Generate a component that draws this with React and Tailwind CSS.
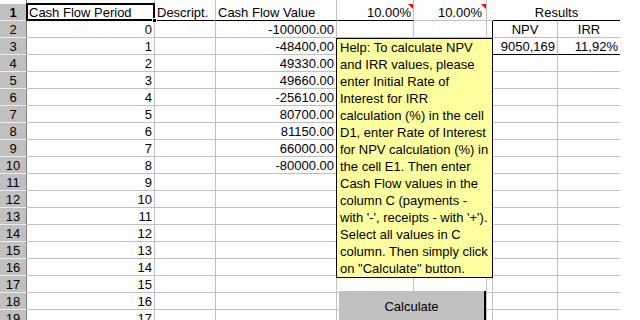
const widths = [
  "w-[27px]",
  "w-[128px]",
  "w-[61px]",
  "w-[121px]",
  "w-[77px]",
  "w-[73px]",
  "w-[6px]",
  "w-[65px]",
  "w-[62px]",
]

const values = [
  "-100000.00",
  "-48400,00",
  "49330.00",
  "49660.00",
  "-25610.00",
  "80700.00",
  "81150.00",
  "66000.00",
  "-80000.00",
]

const helpLines = [
  "Help: To calculate NPV",
  "and IRR values, please",
  "enter Initial Rate of",
  "Interest for IRR",
  "calculation (%) in the cell",
  "D1, enter Rate of Interest",
  "for NPV calculation (%) in",
  "the cell E1. Then enter",
  "Cash Flow values in the",
  "column C (payments -",
  "with '-', receipts - with '+').",
  "Select all values in C",
  "column. Then simply click",
  'on "Calculate" button.',
]

function Cell({ col, className = "", children }) {
  return (
    <div
      className={`${widths[col]} h-full shrink-0 border-r border-b border-[#c0c0c0] flex items-center px-[2px] whitespace-nowrap overflow-hidden ${className}`}
    >
      {children}
    </div>
  )
}

function RowHeader({ n, bold }) {
  return (
    <div
      className={`w-[27px] h-full shrink-0 bg-[#c0c0c0] border-r border-r-[#808080] border-b border-b-[#ececec] flex items-center justify-center ${bold ? "font-bold" : ""}`}
    >
      {n}
    </div>
  )
}

function Flag() {
  return (
    <div className="absolute right-0 top-0 w-0 h-0 border-l-[5px] border-l-transparent border-t-[5px] border-t-[#ff0000]" />
  )
}

export default function App() {
  const rows = []
  for (let r = 2; r <= 19; r++) {
    const i = r - 2
    rows.push(
      <div key={r} className="flex h-[17px]">
        <RowHeader n={r} />
        <Cell col={1} className="justify-end">{i}</Cell>
        <Cell col={2} />
        <Cell col={3} className="justify-end">{values[i] || ""}</Cell>
        <Cell col={4} />
        <Cell col={5} />
        <Cell
          col={6}
          className={r === 2 || r === 3 ? "border-r-black" : ""}
        />
        <Cell
          col={7}
          className={
            r === 2
              ? "justify-center"
              : r === 3
              ? "justify-end border-b-black"
              : ""
          }
        >
          {r === 2 ? "NPV" : r === 3 ? "9050,169" : ""}
        </Cell>
        <Cell
          col={8}
          className={
            r === 2
              ? "justify-center border-r-0"
              : r === 3
              ? "justify-end border-b-black border-r-0"
              : "border-r-0"
          }
        >
          {r === 2 ? "IRR" : r === 3 ? "11,92%" : ""}
        </Cell>
      </div>
    )
  }

  return (
    <div className="relative w-[640px] h-[320px] overflow-hidden bg-white text-black text-[13px] font-['Liberation_Sans',Arial,sans-serif] leading-none">
      {/* strip of the row above */}
      <div className="flex h-[4px]">
        <div className="w-[27px] h-full bg-white border-r border-r-[#808080]" />
        <div className="w-[128px] h-full border-r border-[#c0c0c0]" />
        <div className="w-[61px] h-full border-r border-[#c0c0c0]" />
        <div className="w-[121px] h-full border-r border-[#c0c0c0]" />
        <div className="w-[77px] h-full border-r border-[#c0c0c0]" />
        <div className="w-[73px] h-full border-r border-[#c0c0c0]" />
      </div>

      {/* row 1 */}
      <div className="flex h-[17px]">
        <RowHeader n={1} bold />
        <div className="relative w-[128px] h-full shrink-0 border-r border-b border-black flex items-center px-[2px] whitespace-nowrap">
          Cash Flow Period
          <div className="absolute -left-[1px] -top-[1px] -right-[1px] -bottom-[1px] border-2 border-black" />
          <div className="absolute -right-[3px] -bottom-[3px] w-[5px] h-[5px] bg-black border border-white" />
        </div>
        <Cell col={2} className="border-b-black">Descript.</Cell>
        <Cell col={3} className="border-b-black">Cash Flow Value</Cell>
        <Cell col={4} className="relative justify-end border-b-black">
          10.00%
          <Flag />
        </Cell>
        <Cell col={5} className="relative justify-end pr-[4px]">
          10.00%
          <Flag />
        </Cell>
        <div className="w-[6px] h-full shrink-0 border-b border-[#c0c0c0]" />
        <div className="w-[127px] h-full shrink-0 border-b border-black flex items-center justify-center">
          Results
        </div>
      </div>

      {rows}

      {/* cell comment */}
      <div className="absolute left-[336px] top-[38px] w-[157px] h-[240px] border border-black bg-[#ffffa0] px-[3px]">
        {helpLines.map((line) => (
          <div key={line} className="h-[17px] flex items-center whitespace-nowrap">
            {line}
          </div>
        ))}
      </div>

      {/* button */}
      <button className="absolute left-[339px] top-[291px] w-[147px] h-[30px] bg-[#c0c0c0] border-r-2 border-black flex items-center justify-center text-[13px]">
        Calculate
      </button>
    </div>
  )
}
